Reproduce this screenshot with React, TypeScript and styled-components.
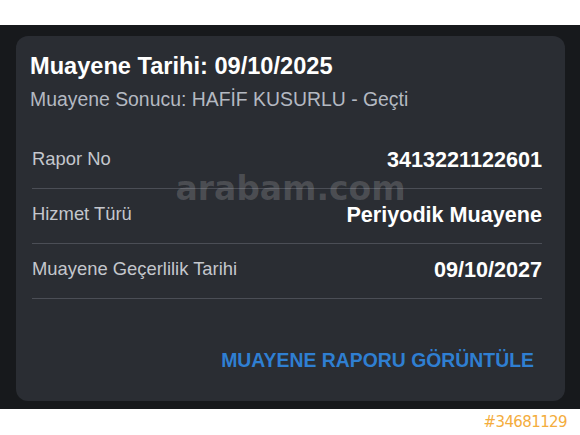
import React from "react";
import styled, { createGlobalStyle } from "styled-components";

interface InfoRow {
  label: string;
  value: string;
}

const rows: InfoRow[] = [
  { label: "Rapor No", value: "3413221122601" },
  { label: "Hizmet Türü", value: "Periyodik Muayene" },
  { label: "Muayene Geçerlilik Tarihi", value: "09/10/2027" },
];

const GlobalStyle = createGlobalStyle`
  html, body {
    margin: 0;
    padding: 0;
    background: #ffffff;
  }
  body {
    font-family: "Liberation Sans", Arial, sans-serif;
  }
`;

const Page = styled.div`
  width: 580px;
  height: 435px;
  padding-top: 25px;
  box-sizing: border-box;
  display: flex;
  flex-direction: column;
`;

const Frame = styled.div`
  height: 384px;
  background: #17191c;
  padding: 11px 15px 0 16px;
  box-sizing: border-box;
`;

const Card = styled.div`
  position: relative;
  height: 365px;
  box-sizing: border-box;
  background: #2a2d33;
  border-radius: 12px;
  padding: 16px 23px 0 14px;
  display: flex;
  flex-direction: column;
`;

const Title = styled.div`
  color: #ffffff;
  font-size: 23.6px;
  font-weight: 700;
  line-height: 28px;
`;

const Subtitle = styled.div`
  margin-top: 8px;
  color: #b4b9c2;
  font-size: 19.4px;
  line-height: 22px;
`;

const List = styled.div`
  margin: 24px 0 0 2px;
  display: flex;
  flex-direction: column;
`;

const Row = styled.div`
  height: 55px;
  box-sizing: border-box;
  padding-bottom: 5px;
  border-bottom: 1px solid #4b4e56;
  display: flex;
  align-items: center;
  justify-content: space-between;
`;

const Label = styled.span`
  color: #c4c7cd;
  font-size: 18.4px;
`;

const Value = styled.span`
  color: #ffffff;
  font-size: 21.6px;
  font-weight: 700;
  margin-top: 2px;
`;

const Footer = styled.div`
  margin-top: 50px;
  padding-right: 8px;
  display: flex;
  justify-content: flex-end;
`;

const LinkButton = styled.button`
  background: none;
  border: none;
  padding: 0;
  cursor: pointer;
  color: #2f7fd2;
  font-family: "Liberation Sans", Arial, sans-serif;
  font-size: 19.4px;
  font-weight: 700;
  line-height: 22px;
`;

const Watermark = styled.div`
  position: absolute;
  left: 0;
  right: 0;
  top: 136px;
  text-align: center;
  font-family: "DejaVu Sans", sans-serif;
  font-size: 33px;
  font-weight: 700;
  line-height: 33px;
  color: rgba(255, 255, 255, 0.16);
  pointer-events: none;
`;

const AdBar = styled.div`
  flex: 1;
  display: flex;
  align-items: center;
  justify-content: flex-end;
  padding-right: 13px;
`;

const AdNumber = styled.span`
  font-family: "DejaVu Sans", sans-serif;
  font-size: 15px;
  letter-spacing: -0.6px;
  color: #f4ad3d;
`;

export default function App() {
  return (
    <>
      <GlobalStyle />
      <Page>
        <Frame>
          <Card>
            <Title>Muayene Tarihi: 09/10/2025</Title>
            <Subtitle>Muayene Sonucu: HAFİF KUSURLU - Geçti</Subtitle>
            <List>
              {rows.map((row) => (
                <Row key={row.label}>
                  <Label>{row.label}</Label>
                  <Value>{row.value}</Value>
                </Row>
              ))}
            </List>
            <Footer>
              <LinkButton>MUAYENE RAPORU GÖRÜNTÜLE</LinkButton>
            </Footer>
            <Watermark>arabam.com</Watermark>
          </Card>
        </Frame>
        <AdBar>
          <AdNumber>#34681129</AdNumber>
        </AdBar>
      </Page>
    </>
  );
}
